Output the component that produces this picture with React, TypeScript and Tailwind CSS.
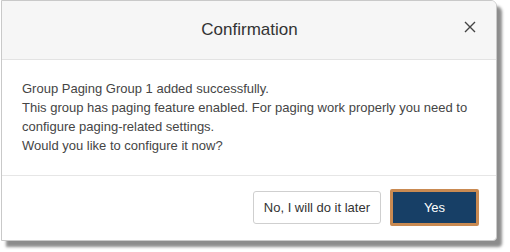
import React from "react";

export default function App() {
  return (
    <div className="w-[510px] h-[252px] bg-white pl-[1px]" style={{ fontFamily: '"Liberation Sans", Arial, sans-serif' }}>
      <div className="w-[496px] h-[241px] bg-white border border-[#c9c9c9] rounded-tr-[6px] rounded-br-[4px] shadow-[5px_6px_3px_rgba(0,0,0,0.45)] flex flex-col overflow-hidden">
        <div className="h-[59px] bg-[#f6f6f6] border-b border-[#e3e3e3] flex items-center relative">
          <div className="flex-1 text-center text-[17px] text-[#333] pl-[1px]">Confirmation</div>
          <span className="absolute right-[20px] top-[20px] text-[#444]">
            <svg width="12" height="12" viewBox="0 0 12 12" fill="none" stroke="#444" strokeWidth="1.4">
              <path d="M1 1L11 11M11 1L1 11" />
            </svg>
          </span>
        </div>
        <div className="h-[116px] border-b border-[#e6e6e6] px-[20px] pt-[19px] text-[13px] leading-[19px] text-[#454545]">
          <div>Group Paging Group 1 added successfully.</div>
          <div>This group has paging feature enabled. For paging work properly you need to</div>
          <div>configure paging-related settings.</div>
          <div>Would you like to configure it now?</div>
        </div>
        <div className="flex-1 flex items-center justify-end gap-[9px] pr-[17px] pb-[1px]">
          <button className="h-[33px] px-[10px] border border-[#cfcfcf] rounded-[3px] bg-white text-[13px] text-[#333]">
            No, I will do it later
          </button>
          <button className="h-[37px] w-[89px] border-[3px] border-[#c98a52] bg-[#173f66] text-white text-[13px] rounded-[2px]">
            Yes
          </button>
        </div>
      </div>
    </div>
  );
}
